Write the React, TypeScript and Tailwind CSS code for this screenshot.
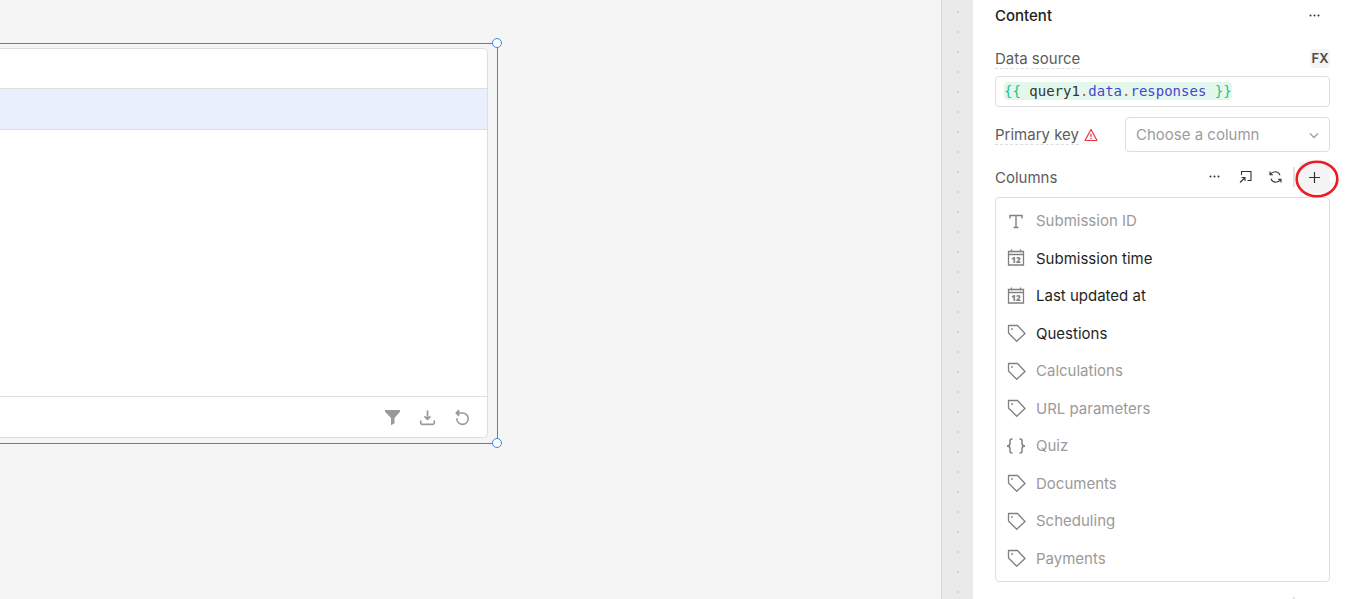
import { useState, type ReactNode } from "react";

type Kind = "text" | "date" | "tag" | "json";

const columns: { name: string; kind: Kind; visible: boolean }[] = [
  { name: "Submission ID", kind: "text", visible: false },
  { name: "Submission time", kind: "date", visible: true },
  { name: "Last updated at", kind: "date", visible: true },
  { name: "Questions", kind: "tag", visible: true },
  { name: "Calculations", kind: "tag", visible: false },
  { name: "URL parameters", kind: "tag", visible: false },
  { name: "Quiz", kind: "json", visible: false },
  { name: "Documents", kind: "tag", visible: false },
  { name: "Scheduling", kind: "tag", visible: false },
  { name: "Payments", kind: "tag", visible: false },
];

function KindIcon({ kind }: { kind: Kind }) {
  const base = {
    width: 20,
    height: 20,
    viewBox: "0 0 20 20",
    fill: "none",
    stroke: "currentColor",
    strokeWidth: 1.2,
    "aria-hidden": true,
  } as const;
  if (kind === "text")
    return (
      <svg {...base} strokeWidth={1.4}>
        <path d="M4 7.500V4.500h12v3M10 4.500v12M7.500 16.500h5" />
      </svg>
    );
  if (kind === "date")
    return (
      <svg {...base} strokeWidth={1.3}>
        <path d="M2.500 3.500h15v13.500h-15zM2.500 6.500h15M5.500 1.500v3M14.500 1.500v3" />
        <text
          x="10"
          y="15"
          textAnchor="middle"
          fill="currentColor"
          stroke="none"
          fontSize="8"
          fontWeight="800"
          fontFamily="Open Sans, sans-serif"
        >
          12
        </text>
      </svg>
    );
  if (kind === "tag")
    return (
      <svg {...base} strokeWidth={1.3} strokeLinejoin="round">
        <path d="M2.500 2.500h9l7.500 8-8.300 7.800L2.500 10z" />
        <circle cx="6" cy="6" r=".9" fill="currentColor" stroke="none" />
      </svg>
    );
  return (
    <svg {...base} strokeWidth={1.5}>
      <path d="M6.500 3H6C4.500 3 4 3.800 4 5v2.500C4 9.200 3 10 1 10c2 0 3 .8 3 2.500V15c0 1.200.5 2 2 2h.5" />
      <path d="M13.500 3h.5c1.500 0 2 .8 2 2v2.500c0 1.700 1 2.500 3 2.500-2 0-3 .8-3 2.500V15c0 1.200-.5 2-2 2h-.5" />
    </svg>
  );
}

function Dots() {
  return (
    <svg width="14" height="14" viewBox="0 0 14 14" fill="currentColor" aria-hidden="true">
      <circle cx="2.500" cy="6.500" r="1" />
      <circle cx="6.500" cy="6.500" r="1" />
      <circle cx="10.500" cy="6.500" r="1" />
    </svg>
  );
}

function IconButton({ label, children }: { label: string; children: ReactNode }) {
  return (
    <button
      type="button"
      aria-label={label}
      className="flex size-[30px] items-center justify-center rounded text-[#333] hover:bg-[#f4f4f4]"
    >
      {children}
    </button>
  );
}

const tokenColor = (token: string, afterDot: boolean) => {
  if (token === "{{" || token === "}}") return "text-[#27c08a]";
  if (token === ".") return "text-[#c2571a]";
  return afterDot ? "text-[#4a44d4]" : "text-[#333]";
};

function CodeField() {
  const [value, setValue] = useState("{{ query1.data.responses }}");
  const tokens = value.match(/\{\{|\}\}|\.|\s+|[^\s.{}]+|[{}]/g) ?? [];
  return (
    <div className="mt-2 grid h-[31px] items-center rounded border border-[#dedede] px-2 pb-px font-['DejaVu_Sans_Mono',monospace] text-[14px] leading-[18px]">
      <pre
        aria-hidden="true"
        className="col-start-1 row-start-1 justify-self-start rounded-[4px] bg-[#e2f8ec] font-[inherit]"
      >
        {tokens.map((token, i) => (
          <span key={i} className={tokenColor(token, tokens[i - 1] === ".")}>
            {token}
          </span>
        ))}
      </pre>
      <input
        id="data-source"
        value={value}
        onChange={(e) => setValue(e.target.value)}
        spellCheck={false}
        className="col-start-1 row-start-1 w-full bg-transparent text-transparent caret-[#333] outline-none"
      />
    </div>
  );
}

function Canvas() {
  return (
    <main className="min-w-0 flex-1 border-r border-[#d9d9d9] bg-[#f5f5f5] pt-[43px]">
      <section
        aria-label="Table"
        className="relative h-[401px] w-[498px] border-y border-r border-[#3b82f6] pt-1 pr-[9px] pb-[5px]"
      >
        <div className="flex h-full flex-col rounded-r-[5px] border-y border-r border-[#dedede] bg-white">
          <div className="h-[39px]" />
          <div className="h-[42px] border-y border-[#dedede] bg-[#e9effd]" />
          <div className="flex-1" />
          <div className="flex h-[41px] items-center justify-end gap-[15px] border-t border-[#dedede] pr-[15px] text-[#9a9a9a]">
            <button type="button" aria-label="Filter" className="size-5">
              <svg width="20" height="20" viewBox="0 0 20 20" fill="currentColor" aria-hidden="true">
                <path d="M3 3h15v1.700L12.500 11v5.300L9 18.300V11L3 4.700z" />
              </svg>
            </button>
            <button type="button" aria-label="Download" className="size-5">
              <svg width="20" height="20" viewBox="0 0 20 20" fill="none" stroke="currentColor" strokeWidth="1.700" strokeLinecap="round" strokeLinejoin="round" aria-hidden="true">
                <path d="M10.500 4v8M8 9.800l2.500 2.500L13 9.800M3.700 14v1.700c0 1 .6 1.600 1.600 1.600h10.400c1 0 1.600-.6 1.600-1.600V14" />
              </svg>
            </button>
            <button type="button" aria-label="Refresh" className="size-5">
              <svg width="20" height="20" viewBox="0 0 20 20" fill="none" stroke="currentColor" strokeWidth="1.600" strokeLinecap="round" strokeLinejoin="round" aria-hidden="true">
                <path d="M5 6h5.500a5.700 5.700 0 1 1-5.700 5.700" />
                <path d="M6.500 3.500v5L4.200 6z" fill="currentColor" />
              </svg>
            </button>
          </div>
        </div>
        <span className="absolute -top-[6px] -right-[5px] size-[10px] rounded-full border border-[#3b82f6] bg-white" />
        <span className="absolute -right-[5px] -bottom-[5px] size-[10px] rounded-full border border-[#3b82f6] bg-white" />
      </section>
    </main>
  );
}

function Inspector() {
  return (
    <aside className="w-[376px] shrink-0 bg-white pr-[19px] pl-[22px]">
      <header className="flex h-[31px] items-center justify-between">
        <h2 className="font-medium text-[#222]">Content</h2>
        <IconButton label="Content options">
          <Dots />
        </IconButton>
      </header>

      <div className="mt-[18px] flex h-[19px] items-center justify-between">
        <label htmlFor="data-source" className="border-b border-dashed border-[#dcdcdc]">
          Data source
        </label>
        <button
          type="button"
          aria-label="FX"
          className="flex h-[19px] w-5 items-center justify-center rounded bg-[#f4f4f4] text-[13px] font-semibold text-[#4d4d4d]"
        >
          FX
        </button>
      </div>
      <CodeField />

      <div className="mt-[10px] flex items-center">
        <label htmlFor="primary-key" className="border-b border-dashed border-[#dcdcdc]">
          Primary key
        </label>
        <svg
          width="14"
          height="14"
          viewBox="0 0 14 14"
          fill="none"
          stroke="#e5383f"
          strokeWidth="1.200"
          strokeLinejoin="round"
          className="ml-[5px]"
          role="img"
          aria-label="Warning"
        >
          <path d="M7 1.500L13 12.500H1zM7 5.500v3.500M7 10v1.200" />
        </svg>
        <div className="relative ml-auto w-[205px]">
          <select
            id="primary-key"
            defaultValue=""
            className="h-[35px] w-full appearance-none rounded border border-[#dedede] bg-white pl-[10px] text-[#9c9c9c]"
          >
            <option value="">Choose a column</option>
            {columns.map((c) => (
              <option key={c.name}>{c.name}</option>
            ))}
          </select>
          <svg
            width="10"
            height="10"
            viewBox="0 0 10 10"
            fill="none"
            stroke="#a3a3a3"
            strokeWidth="1.500"
            className="pointer-events-none absolute top-[13px] right-[11px]"
            aria-hidden="true"
          >
            <path d="M1 3.500l4 4 4-4" />
          </svg>
        </div>
      </div>

      <div className="mt-[10px] flex h-[30px] items-center">
        <h3 className="mr-auto">Columns</h3>
        <IconButton label="Column options">
          <Dots />
        </IconButton>
        <IconButton label="Map columns">
          <svg width="14" height="14" viewBox="0 0 14 14" fill="none" stroke="currentColor" strokeWidth="1.100" aria-hidden="true">
            <path d="M3.500 5V1.500h9.500v9H9.500M2 12.500l5-5M3.500 7.500H7V11" />
          </svg>
        </IconButton>
        <IconButton label="Reload columns">
          <svg width="14" height="14" viewBox="0 0 14 14" fill="none" stroke="currentColor" strokeWidth="1.100" aria-hidden="true">
            <path d="M2 1.500v3.200h3M2.200 4.500C3.500 2.600 5.300 1.800 7.300 1.800c2 0 3.800 1.200 4.700 3.400M13 12.500V9.300h-3M12.800 9.500c-1.300 1.900-3.100 2.700-5.100 2.700-2 0-3.800-1.200-4.700-3.400" />
          </svg>
        </IconButton>
        <span className="mr-1 ml-[3px] h-5 w-[2px] bg-[#e2e2e2]" />
        <div className="relative">
          <button
            type="button"
            aria-label="Add column"
            className="flex size-[31px] items-center justify-center rounded bg-[#f4f4f4] text-[#333]"
          >
            <svg width="13" height="13" viewBox="0 0 13 13" fill="none" stroke="currentColor" strokeWidth="1.200" aria-hidden="true">
              <path d="M6.500 1v11M1 6.500h11" />
            </svg>
          </button>
          <svg
            width="44"
            height="38"
            viewBox="0 0 44 38"
            fill="none"
            stroke="#ed1c24"
            strokeWidth="2.600"
            className="pointer-events-none absolute -top-[2px] -left-[4px] max-w-none"
            aria-hidden="true"
          >
            <ellipse cx="22" cy="19" rx="20.300" ry="17.300" />
          </svg>
        </div>
      </div>

      <ul className="mt-[5px] grid h-[385px] auto-rows-fr rounded border border-[#dedede] py-1">
        {columns.map(({ name, kind, visible }) => (
          <li key={name} className="flex items-center gap-[10px] pl-[10px]">
            <span className="text-[#808080]">
              <KindIcon kind={kind} />
            </span>
            <span className={visible ? "text-[#1f1f1f]" : "text-[#9a9a9a]"}>{name}</span>
          </li>
        ))}
      </ul>

      <div className="mt-[15px] flex justify-end pr-[35px]">
        <span className="h-5 w-[2px] bg-[#e2e2e2]" />
      </div>
    </aside>
  );
}

export default function App() {
  return (
    <div className="flex h-screen overflow-hidden bg-[#f5f5f5] font-[Inter,sans-serif] text-[15px] leading-[19px] text-[#5c5c5c]">
      <Canvas />
      <div className="w-[31px] shrink-0 bg-[#eaeaea] bg-[radial-gradient(circle,#d2d2d2_1px,transparent_1px)] bg-[length:32px_20px] bg-[position:0_2px]" />
      <Inspector />
    </div>
  );
}
